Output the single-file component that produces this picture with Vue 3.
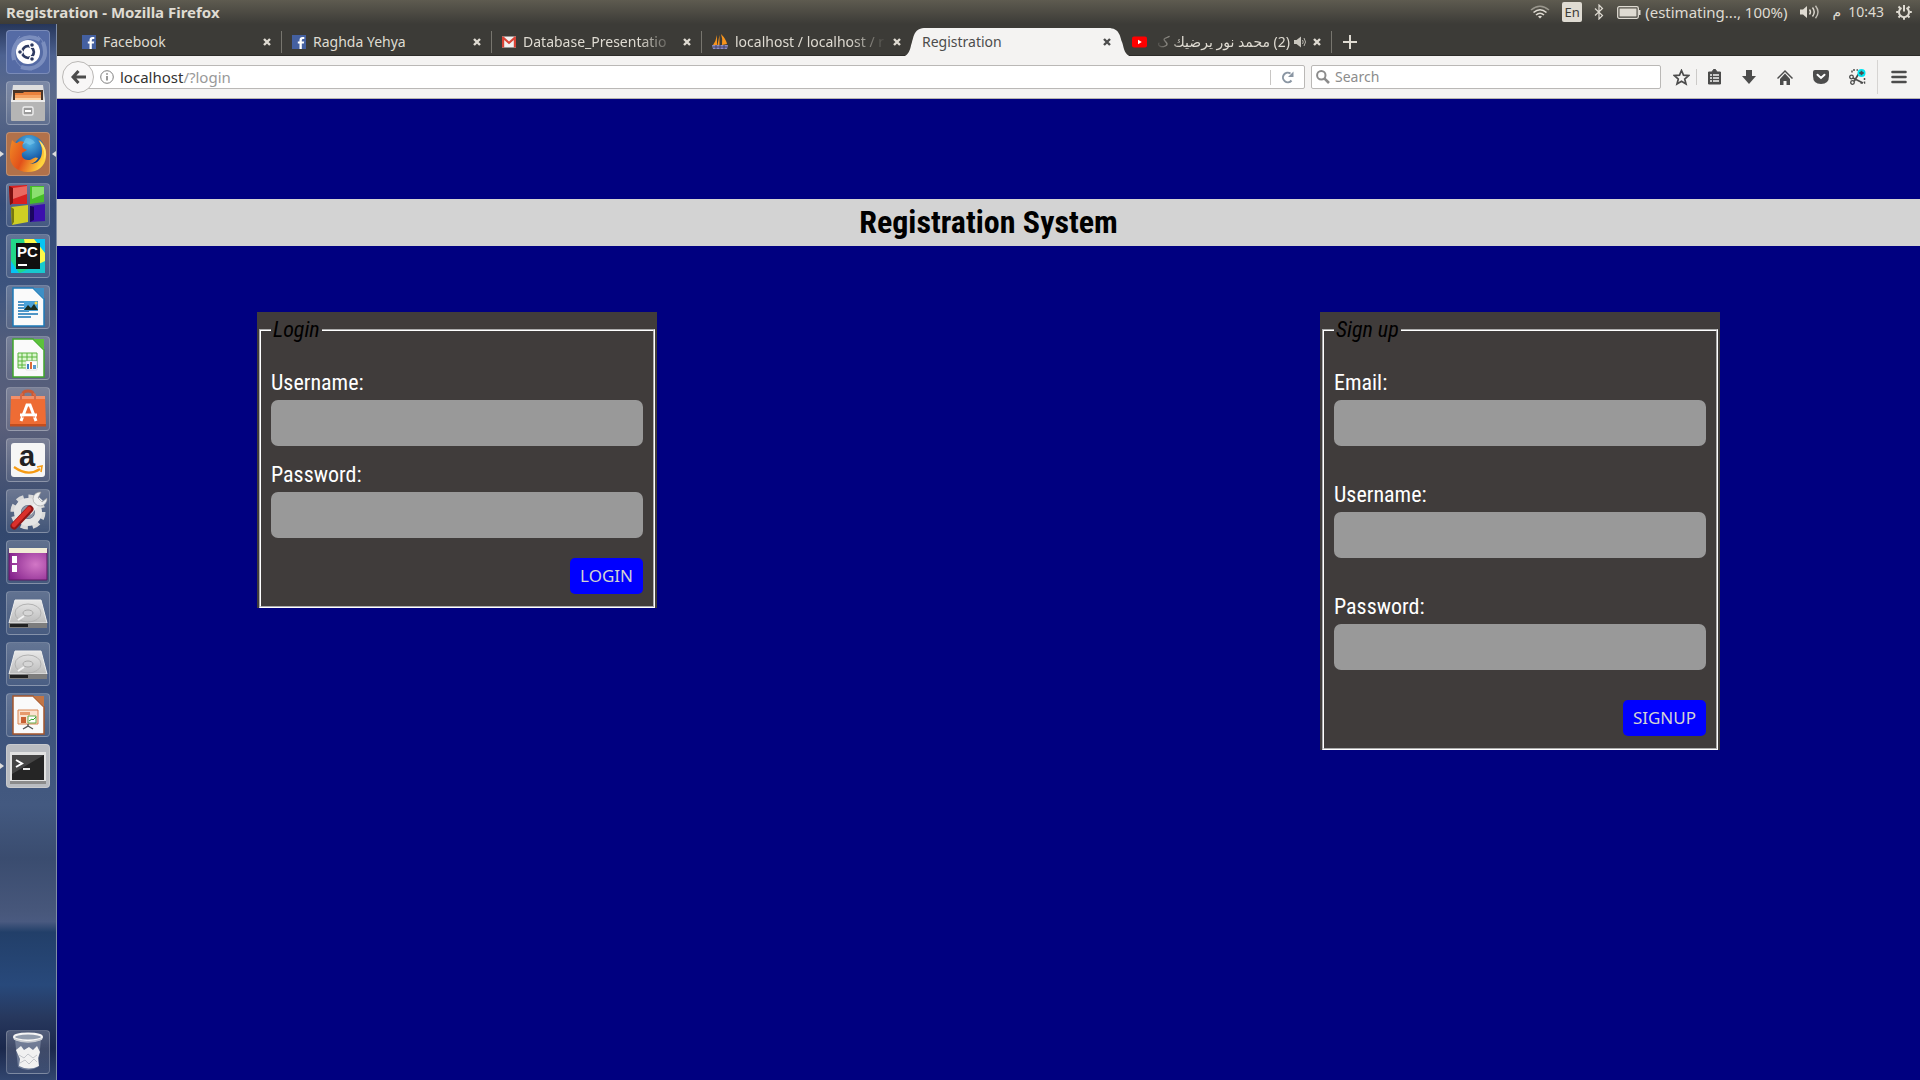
<script setup>
import { ref } from 'vue'

const tabs = [
  { title: 'Facebook', icon: 'facebook' },
  { title: 'Raghda Yehya', icon: 'facebook' },
  { title: 'Database_Presentatio', icon: 'gmail', fade: true },
  { title: 'localhost / localhost / r', icon: 'sails', fade: true, bare: true },
  { title: 'Registration', active: true },
  { title: '(2) محمد نور يرضيك ک', icon: 'youtube', rtl: true, audio: true },
]

const launcher = [
  { id: 'dash', label: 'Search your computer' },
  { id: 'files', label: 'Files' },
  { id: 'firefox', label: 'Firefox', tone: 'orange', running: true, focused: true },
  { id: 'codeblocks', label: 'Code::Blocks' },
  { id: 'pycharm', label: 'PyCharm' },
  { id: 'writer', label: 'Writer' },
  { id: 'calc', label: 'Calc' },
  { id: 'software', label: 'Software' },
  { id: 'amazon', label: 'Amazon' },
  { id: 'settings', label: 'System Settings' },
  { id: 'switcher', label: 'Workspace Switcher' },
  { id: 'disk', label: 'Volume 1' },
  { id: 'disk', label: 'Volume 2' },
  { id: 'impress', label: 'Impress' },
  { id: 'terminal', label: 'Terminal', tone: 'light', running: true },
  { id: 'trash', label: 'Trash' },
]

const forms = [
  {
    id: 'login',
    legend: 'Login',
    submit: 'LOGIN',
    fields: [
      { name: 'username', label: 'Username:', type: 'text' },
      { name: 'password', label: 'Password:', type: 'password' },
    ],
  },
  {
    id: 'signup',
    legend: 'Sign up',
    submit: 'SIGNUP',
    fields: [
      { name: 'email', label: 'Email:', type: 'email' },
      { name: 'username', label: 'Username:', type: 'text' },
      { name: 'password', label: 'Password:', type: 'password' },
    ],
  },
]

const values = ref({})
</script>

<template>
  <div class="desktop">
    <header class="panel">
      <span class="panel-title">Registration - Mozilla Firefox</span>
      <div class="indicators">
        <svg class="wifi" width="20" height="14" viewBox="0 0 20 14" fill="none" stroke="#dfdbd2" stroke-width="1.6">
          <path d="M1 5Q10-2.500 19 5" opacity=".5" /><path d="M3.500 7.500Q10 2 16.500 7.500" /><path d="M6 10Q10 6.500 14 10" /><path d="M8 11.500Q10 10 12 11.500L10 13.500Z" fill="#dfdbd2" stroke="none" />
        </svg>
        <span class="keyboard">En</span>
        <svg class="bluetooth" width="10" height="16" viewBox="0 0 10 16" fill="none" stroke="#dfdbd2" stroke-width="1.2">
          <path d="M1 4.500L8.500 11.500L5 15V1L8.500 4.500L1 11.500" />
        </svg>
        <svg class="battery" width="24" height="13" viewBox="0 0 24 13">
          <rect x=".7" y=".7" width="20.600" height="11.600" rx="1.500" fill="none" stroke="#dfdbd2" stroke-width="1.300" />
          <rect x="2.500" y="2.500" width="17" height="8" fill="#dfdbd2" /><path d="M22 4h1.500v5H22z" fill="#dfdbd2" />
        </svg>
        <span class="estimate">(estimating..., 100%)</span>
        <svg class="volume" width="20" height="14" viewBox="0 0 20 14" fill="none" stroke="#dfdbd2" stroke-width="1.400">
          <path d="M0 4.500h3L7 1v12L3 9.500H0z" fill="#dfdbd2" stroke="none" />
          <path d="M9.500 4.500q2 2.500 0 5" /><path d="M12.500 2.500q3.500 4.500 0 9" /><path d="M15.500 .7q5 6.300 0 12.600" opacity=".8" />
        </svg>
        <span class="clock"><span>م</span><span>10:43</span></span>
        <svg class="power" width="16" height="16" viewBox="0 0 16 16" fill="none" stroke="#dfdbd2">
          <path d="M5.500 3.800A5 5 0 1 0 10.500 3.800" stroke-width="2" /><path d="M8 1v6.500" stroke-width="2" />
          <path d="M.2 8h2.300M13.500 8h2.300M2.500 2.500l1.700 1.700M13.500 2.500l-1.700 1.700M2.500 13.500l1.700-1.700M13.500 13.500l-1.700-1.700M8 13.500v2.300" stroke-width="2" />
        </svg>
      </div>
    </header>

    <div class="workspace">
      <nav class="launcher" aria-label="Launcher">
        <button
          v-for="item in launcher"
          :key="item.label"
          type="button"
          class="tile"
          :class="[item.tone, item.id, { running: item.running, focused: item.focused }]"
          :aria-label="item.label"
        >
          <svg v-if="item.id === 'dash'" viewBox="0 0 44 44">
            <g fill="none" stroke="#c3cfee" opacity=".35"><path d="M8 30C4 12 20 2 34 10" stroke-width="4" /><path d="M37 12c7 18-6 30-22 25" stroke-width="4" /><path d="M14 6C2 18 8 40 26 40M32 6c10 8 8 22 2 28" /></g>
            <circle cx="22" cy="22" r="12" fill="#fff" />
            <circle cx="22" cy="22" r="5.800" fill="none" stroke="#2d3a61" stroke-width="2.800" />
            <g stroke="#fff" stroke-width="1.200"><path d="M22 22h-8M22 22l4-7M22 22l4 7" /><circle cx="14" cy="22" r="2.400" fill="#2d3a61" /><circle cx="26" cy="15" r="2.400" fill="#2d3a61" /><circle cx="26" cy="29" r="2.400" fill="#2d3a61" /></g>
            <circle cx="22" cy="22" r="4.300" fill="#fff" />
          </svg>

          <svg v-else-if="item.id === 'files'" viewBox="0 0 44 44">
            <path d="M7 4h30l2 15H5z" fill="#dedede" /><path d="M7 9h30v10H7z" fill="#4a3528" />
            <path d="M9 12h8l1-1h17v8H9z" fill="#e8803c" /><path d="M9 14h26v5H9z" fill="#f3a263" /><path d="M9 17h26v2H9z" fill="#fbd0a0" />
            <rect x="5" y="19" width="34" height="21" rx="1" fill="#b5b5b5" /><path d="M5 19h34v2H5z" fill="#ececec" />
            <rect x="17" y="26" width="10" height="8" rx="1.500" fill="#9a9a9a" stroke="#eee" stroke-width="1.400" /><path d="M19 29h6v2h-6z" fill="#fff" />
          </svg>

          <svg v-else-if="item.id === 'firefox'" viewBox="0 0 44 44">
            <defs>
              <radialGradient id="globe" cx=".5" cy=".25" r=".8"><stop offset="0" stop-color="#55b8e8" /><stop offset=".6" stop-color="#1c63ad" /><stop offset="1" stop-color="#0b2b66" /></radialGradient>
              <linearGradient id="fox" x1="0" y1="0" x2="1" y2=".4"><stop offset="0" stop-color="#f08a25" /><stop offset=".5" stop-color="#e2501a" /><stop offset="1" stop-color="#ffd23c" /></linearGradient>
            </defs>
            <circle cx="23" cy="19" r="16" fill="url(#globe)" />
            <path d="M20 6c4 0 8 2 9 5l-5 2-4-2-4 2z" fill="#86cdf0" opacity=".5" />
            <path d="M6 8c2 2 3 3 5 3 2-2 5-2 7-1-2 2-2 4-1 6l4 2-5 3c-1 4 2 7 6 7 5 0 6-4 10-2-2 4-6 6-10 6 9 1 14-5 14-13 0-5-2-8-4-11 6 4 9 10 8 17-1 9-8 15-18 15C11 40 3 33 4 22 4 16 5 13 6 8z" fill="url(#fox)" />
            <path d="M33 8c6 5 9 12 5 20 1-6 0-10-2-13z" fill="#ffe36a" />
          </svg>

          <svg v-else-if="item.id === 'codeblocks'" viewBox="0 0 44 44">
            <path d="M3 3l18-1v19H4z" fill="#d82020" /><path d="M3 3l4 2v15l-3 2z" fill="#7c1010" /><path d="M7 5l14-2v8L7 16z" fill="#ea6961" />
            <path d="M24 3h14v16l-14 2z" fill="#47bd28" /><path d="M26 4h12v7l-12 5z" fill="#8be06f" />
            <path d="M5 24l17-2v17L6 42z" fill="#cfcf24" /><path d="M5 24l3 2v13l-2 3z" fill="#77770f" />
            <path d="M24 23l15-2v17l-15 1z" fill="#3b10ad" /><path d="M24 23l4 1v13l-4 2z" fill="#1b0660" />
          </svg>

          <svg v-else-if="item.id === 'pycharm'" viewBox="0 0 44 44">
            <path d="M5 5h34v34H5z" fill="#21d789" /><path d="M18 5h16l5 12v12l-15 10z" fill="#fcf84a" /><path d="M5 27l8 12H5zM28 5h11v14z" fill="#07c3f2" /><path d="M39 27v12H14z" fill="#19c9ce" />
            <path d="M10 9h24v26H10z" fill="#101010" /><text x="11" y="23" class="glyph pc">PC</text><path d="M12 30h9v2h-9z" fill="#fff" />
          </svg>

          <svg v-else-if="item.id === 'writer' || item.id === 'calc' || item.id === 'impress'" viewBox="0 0 44 44">
            <path d="M7 3h20l11 11v27H7z" fill="#fafafa" :stroke="item.id === 'writer' ? '#1c7ab8' : item.id === 'calc' ? '#3fa62b' : '#a4562c'" stroke-width="1.500" />
            <path d="M27 3h11v11z" :fill="item.id === 'writer' ? '#3c8fc6' : item.id === 'calc' ? '#5cc13b' : '#c27545'" />
            <g v-if="item.id === 'writer'">
              <path d="M12 17h11M12 20h11M12 23h11M12 26h11M12 29h20M12 32h13" stroke="#1774b5" stroke-width="1.500" />
              <path d="M18 16h14v10H18z" fill="#4aa2d8" /><path d="M18 25l4-5 3 3 3-4 4 6z" fill="#1d2f20" /><circle cx="30" cy="18" r="1.500" fill="#ffdb45" />
            </g>
            <g v-else-if="item.id === 'calc'">
              <path d="M12 17h19v15H12zM12 21h19M12 25h19M12 29h19M16 17v15M21 17v15M26 17v15" fill="#dcf6cf" stroke="#58b43c" />
              <path d="M20 25h11v9H20z" fill="#fff" stroke="#ccc" stroke-width=".5" /><path d="M21 28h2v5h-2z" fill="#3b82c4" /><path d="M24 26h2v7h-2z" fill="#dd6b3a" /><path d="M27 29h3v4h-3z" fill="#5a9bd0" />
            </g>
            <g v-else>
              <path d="M12 17h20v14H12z" fill="#fbe2cf" stroke="#d98551" /><path d="M14 19h10v3H14z" fill="#e79a6c" /><path d="M15 24h5v6h-5z" fill="#c86033" /><path d="M22 23h8v7h-8z" fill="#fff" stroke="#65a948" /><path d="M23 28l3-2 1 1 3-3" fill="none" stroke="#35a22b" />
              <path d="M22 31v2l-5 3M22 33l5 3" fill="none" stroke="#555" stroke-width="1.400" />
            </g>
          </svg>

          <svg v-else-if="item.id === 'software'" viewBox="0 0 44 44">
            <path d="M17 14V7q0-3 5-3t5 3v7" fill="none" stroke="#c95a35" stroke-width="3" />
            <path d="M5 9h34l1 30H4z" fill="#ee6c34" /><path d="M5 9h34v3H5z" fill="#f2906a" /><path d="M4 37h36v2.500H4z" fill="#c34e1e" />
            <path d="M15 13V8q0-1 2-1M29 13V8q0-1-2-1" fill="none" stroke="#d36a4a" stroke-width="2" />
            <path d="M15 34l6-16h3l6 16" fill="none" stroke="#fff" stroke-width="3" /><path d="M14 28h17" stroke="#fff" stroke-width="3" /><path d="M16 30h13" stroke="#ee6c34" />
          </svg>

          <svg v-else-if="item.id === 'amazon'" viewBox="0 0 44 44">
            <rect x="5" y="5" width="34" height="34" rx="3" fill="#f6f6f6" />
            <text x="13" y="28" class="glyph amazon-letter">a</text>
            <path d="M8 29q14 10 26 2" fill="none" stroke="#f59a13" stroke-width="2.200" /><path d="M31 29l5-1-1 6" fill="none" stroke="#f59a13" stroke-width="1.600" />
          </svg>

          <svg v-else-if="item.id === 'settings'" viewBox="0 0 44 44">
            <circle cx="22" cy="23" r="15" fill="none" stroke="#d9d9d9" stroke-width="5" stroke-dasharray="7 4.780" />
            <circle cx="22" cy="23" r="10.500" fill="none" stroke="#e4e4e4" stroke-width="7" /><circle cx="22" cy="23" r="6.500" fill="#8f96a4" />
            <path d="M23 24L35 10" stroke="#eee" stroke-width="5" /><path d="M35 3a7 7 0 1 0 6 6l-5 4-4-4z" fill="#eee" stroke="#999" stroke-width=".6" />
            <path d="M8 37L24 20" stroke="#8f1616" stroke-width="7" stroke-linecap="round" /><path d="M8 36L23 20" stroke="#d9302c" stroke-width="4.500" stroke-linecap="round" />
          </svg>

          <svg v-else-if="item.id === 'switcher'" viewBox="0 0 44 44">
            <defs><radialGradient id="wall" cx=".7" cy=".5" r=".8"><stop offset="0" stop-color="#d277c6" /><stop offset="1" stop-color="#82208a" /></radialGradient></defs>
            <path d="M3 9h38v31H3z" fill="url(#wall)" stroke="#5d1863" /><path d="M3 8h38v5H3z" fill="#f1ecd6" />
            <path d="M6 16h5v7H6zM6 25h5v7H6z" fill="#fff" />
          </svg>

          <svg v-else-if="item.id === 'disk'" viewBox="0 0 44 44">
            <defs><linearGradient id="metal" x1="0" y1="0" x2="0" y2="1"><stop offset="0" stop-color="#e8e8e8" /><stop offset="1" stop-color="#bcbcbc" /></linearGradient></defs>
            <path d="M9 9h26l6 23H3z" fill="url(#metal)" stroke="#eee" /><path d="M3 32h38v5H3z" fill="#7d7d7d" /><path d="M4 33h18v3H4z" fill="#222" />
            <ellipse cx="22" cy="22" rx="13" ry="9" fill="none" stroke="#b2b2b2" /><ellipse cx="22" cy="22" rx="5" ry="3" fill="#d5d5d5" stroke="#aaa" /><path d="M18 25l-6 4" stroke="#f3f3f3" stroke-width="2" />
          </svg>

          <svg v-else-if="item.id === 'terminal'" viewBox="0 0 44 44">
            <path d="M4 8h36v31H4z" fill="#e2e2e2" /><path d="M4 37h36v3H4z" fill="#8b8b8b" /><path d="M6 11h32v25H6z" fill="#252525" /><path d="M6 11h32L6 30z" fill="#454545" />
            <path d="M10 16l6 3.500-6 3.500" fill="none" stroke="#fff" stroke-width="2" /><path d="M17 25h7" stroke="#fff" stroke-width="1.800" />
          </svg>

          <svg v-else viewBox="0 0 44 44">
            <path d="M9 10l3 27q10 6 20 0l3-27z" fill="#a9b4c8" opacity=".45" />
            <path d="M10 20l5-4 3 4 5-3 4 3 4-4 3 6-2 6 1 8q-10 5-20 0l1-7z" fill="#f1f1f1" /><path d="M13 25l5 3 4-4 5 4 4-3M14 33l5-3 4 4 5-5 3 3" stroke="#c4c6cb" fill="none" />
            <ellipse cx="22" cy="7" rx="14" ry="3.500" fill="#919cad" stroke="#f5f5f5" stroke-width="2" /><path d="M8 9q14 6 28 0" fill="none" stroke="#c9ccd2" stroke-width="1.500" />
          </svg>
        </button>
      </nav>

      <div class="browser">
        <div class="tabs">
          <div v-for="(tab, i) in tabs" :key="i" class="tab" :class="{ active: tab.active, bare: tab.bare }">
            <svg v-if="tab.active" class="tab-shape" width="234" height="29" viewBox="0 0 234 29">
              <path d="M0 29C10 29 10 20 12 14S14 0 26 0H208C220 0 220 9 222 14S224 29 234 29Z" fill="#f4f3f2" />
            </svg>
            <svg v-if="tab.icon === 'facebook'" class="favicon" width="14" height="14" viewBox="0 0 14 14">
              <path d="M0 0h14v14H0z" fill="#4460a0" /><path d="M7.500 14V8.500H5.800V6.400h1.700V5q0-3 3-3h1.800v2H11q-1.200 0-1.200 1.200v1.200h2.400l-.4 2.100h-2V14z" fill="#fff" />
            </svg>
            <svg v-else-if="tab.icon === 'gmail'" class="favicon" width="14" height="14" viewBox="0 0 14 14">
              <path d="M0 1.500h14v11H0z" fill="#f1f1f1" /><path d="M0 12.500v-11h1.500L7 6.500l5.500-5H14v11h-2.200V5L7 9.300 2.200 5v7.500z" fill="#d84437" />
            </svg>
            <svg v-else-if="tab.icon === 'sails'" class="favicon" width="16" height="16" viewBox="0 0 16 16">
              <path d="M5 1v10H1Q4 7 5 1zM9 0q5 5 6 10l-5 1q1-6-1-11zM7.500 1v10H5.500z" fill="#f7941d" /><path d="M0 11h16l-1 4H1z" fill="#8d8dc0" /><path d="M1 13h14M4 11v4M8 11v4M12 11v4" stroke="#43436e" />
            </svg>
            <svg v-else-if="tab.icon === 'youtube'" class="favicon" width="15" height="14" viewBox="0 0 15 14">
              <rect y="1.500" width="15" height="11" rx="2" fill="#f00" /><path d="M6 4.800v4.400L9.800 7z" fill="#fff" />
            </svg>
            <span class="tab-title" :class="{ faded: tab.fade, rtl: tab.rtl }" :dir="tab.rtl ? 'rtl' : 'ltr'">{{ tab.title }}</span>
            <svg v-if="tab.audio" class="audio" width="13" height="12" viewBox="0 0 13 12" fill="none" stroke="#b9b6ae">
              <path d="M0 4h2.500L7 .5v11L2.500 8H0z" fill="#c9c6be" stroke="none" /><path d="M8.500 4q1.500 2 0 4M10 2q3 4 0 8" />
            </svg>
            <button type="button" class="close" :aria-label="'Close ' + tab.title">
              <svg width="8" height="8" viewBox="0 0 8 8" fill="none" stroke="currentColor" stroke-width="2.400"><path d="M1 1l6 6M7 1L1 7" /></svg>
            </button>
          </div>
          <button type="button" class="new-tab" aria-label="New tab">
            <svg width="14" height="14" viewBox="0 0 14 14" stroke="#dfdbd2" stroke-width="2"><path d="M7 0v14M0 7h14" /></svg>
          </button>
        </div>

        <div class="toolbar">
          <button type="button" class="back" aria-label="Back">
            <svg width="15" height="14" viewBox="0 0 15 14" fill="none" stroke="#4c4c4c" stroke-width="3"><path d="M7.500 1L2 7l5.500 6M2 7h13" /></svg>
          </button>
          <div class="address">
            <svg width="14" height="14" viewBox="0 0 14 14" fill="none" stroke="#808080"><circle cx="7" cy="7" r="6.300" /><path d="M7 6v4.500M7 3.200v1.600" stroke-width="1.600" /></svg>
            <a class="url" href="?login">localhost<span>/?login</span></a>
            <button type="button" class="reload" aria-label="Reload">
              <svg width="13" height="13" viewBox="0 0 13 13" fill="none" stroke="#8a96a3" stroke-width="2"><path d="M9.500 2.500A4.800 4.800 0 1 0 10.500 9.500" /><path d="M12.500 .5V6H7z" fill="#8a96a3" stroke="none" /></svg>
            </button>
          </div>
          <label class="search">
            <svg width="14" height="14" viewBox="0 0 14 14" fill="none" stroke="#8b8b8b" stroke-width="2"><circle cx="5.300" cy="5.300" r="4.200" /><path d="M8.300 8.300L13 13" stroke-width="2.600" /></svg>
            <input type="text" placeholder="Search" aria-label="Search" />
          </label>
          <div class="tools">
            <button type="button" class="tool star" aria-label="Bookmark"><svg width="17" height="17" viewBox="0 0 17 17"><path d="M8.500 1.500l2 4.700 5.200.4-4 3.400 1.300 5-4.500-2.700L4 15l1.300-5-4-3.400 5.200-.4z" fill="none" stroke="#4c4c4c" stroke-width="1.700" /></svg></button>
            <button type="button" class="tool" aria-label="Bookmarks list"><svg width="15" height="16" viewBox="0 0 15 16"><path d="M1.500 3H5l1.500-2.500h2L10 3h3.500v12h-12z" fill="#4c4c4c" stroke="#4c4c4c" stroke-linejoin="round" /><path d="M3 6h2M3 9h2M3 12h2M6 6h6M6 9h6M6 12h6" stroke="#f4f3f2" stroke-width="1.600" /></svg></button>
            <button type="button" class="tool" aria-label="Downloads"><svg width="14" height="14" viewBox="0 0 14 14"><path d="M4 0h6v6h4l-7 8-7-8h4z" fill="#4c4c4c" /></svg></button>
            <button type="button" class="tool" aria-label="Home"><svg width="16" height="15" viewBox="0 0 16 15"><path d="M0 8l8-8 8 8-1 1-7-7-7 7z" fill="#4c4c4c" /><path d="M3 9l5-5.500L13 9v6H9.500v-4h-3v4H3z" fill="#4c4c4c" /></svg></button>
            <button type="button" class="tool" aria-label="Pocket"><svg width="16" height="14" viewBox="0 0 16 14"><path d="M2 0h12q2 0 2 2v4q0 8-8 8T0 6V2q0-2 2-2z" fill="#4c4c4c" /><path d="M4.500 4.700L8 8l3.500-3.300" fill="none" stroke="#fff" stroke-width="2" stroke-linecap="round" /></svg></button>
            <button type="button" class="tool" aria-label="Clip"><svg width="17" height="16" viewBox="0 0 17 16" fill="none" stroke="#4c4c4c"><path d="M3 3.500V1h6M15.500 9v5h-5" stroke-width="1.500" stroke-dasharray="2 1.500" /><circle cx="2.500" cy="8" r="1.800" stroke-width="1.300" /><circle cx="3.500" cy="13.500" r="1.800" stroke-width="1.300" /><path d="M4 9l10 5M5 12.500L9.500 5" stroke-width="1.700" /><circle cx="12.500" cy="4" r="4" fill="#00e5f2" stroke="none" /><path d="M12.500 1.800v4.400M10.300 4h4.400" stroke-width="1.800" /></svg></button>
            <button type="button" class="menu" aria-label="Menu"><svg width="16" height="14" viewBox="0 0 16 14" stroke="#4c4c4c" stroke-width="2.600" stroke-linecap="round"><path d="M1.500 2h13M1.500 7h13M1.500 12h13" /></svg></button>
          </div>
        </div>

        <main class="page">
          <h1>Registration System</h1>
          <div class="forms">
            <form v-for="form in forms" :key="form.id" class="card" :class="form.id" @submit.prevent>
              <fieldset>
                <legend>{{ form.legend }}</legend>
                <div class="fields">
                  <div v-for="field in form.fields" :key="field.name" class="field">
                    <label :for="form.id + '-' + field.name">{{ field.label }}</label>
                    <input :id="form.id + '-' + field.name" v-model="values[form.id + field.name]" :type="field.type" autocomplete="off" />
                  </div>
                </div>
                <button type="submit" class="submit">{{ form.submit }}</button>
              </fieldset>
            </form>
          </div>
        </main>
      </div>
    </div>
  </div>
</template>

<style>
body {
  margin: 0;
  background: #000080;
}
</style>

<style scoped>
* {
  box-sizing: border-box;
}
button {
  padding: 0;
  border: 0;
  background: none;
  font: inherit;
  color: inherit;
}
svg {
  display: block;
  flex: none;
}
.desktop {
  display: flex;
  flex-direction: column;
  min-height: 100vh;
  font: 14px/20px "Noto Sans", "DejaVu Sans", sans-serif;
}

/* Top panel */
.panel {
  display: flex;
  align-items: center;
  justify-content: space-between;
  height: 24px;
  padding: 0 8px 0 6px;
  background: linear-gradient(#5e5b50, #3c3b37);
  color: #dfdbd2;
}
.panel-title {
  font-size: 15px;
  font-weight: 700;
}
.indicators {
  display: flex;
  align-items: center;
}
.keyboard {
  width: 20px;
  margin: 0 12px;
  border-radius: 2px;
  background: #dfdbd2;
  color: #3c3b37;
  font-size: 13px;
  text-align: center;
}
.battery {
  margin: 0 4px 0 13px;
}
.estimate {
  font-size: 15px;
}
.volume {
  margin: 0 13px 0 12px;
}
.clock {
  display: flex;
  gap: 7px;
  margin-right: 12px;
}

.workspace {
  display: flex;
  flex: 1;
}

/* Launcher */
.launcher {
  display: flex;
  flex: none;
  flex-direction: column;
  gap: 7px;
  width: 57px;
  padding: 6px;
  border-right: 1px solid #7f8da6;
  background: linear-gradient(#26365a 0%, #4d6291 3%, #5c6b8b 7%, #344a76 17%, #3d547e 25%, #515d7c 30%, #5a5f7a 38%, #33486e 48%, #3b5179 62%, #435980 74%, #3a4c6f 79%, #47577b 84%, #4a5a80 85%, #223f69 86%, #28497b 91%, #27385e 94%, #1b284c 97%, #32466f 100%);
}
.tile {
  position: relative;
  width: 44px;
  height: 44px;
  border: 1px solid rgba(255, 255, 255, 0.22);
  border-radius: 4px;
  background: linear-gradient(rgba(255, 255, 255, 0.22), rgba(255, 255, 255, 0.08));
}
.tile svg {
  width: 44px;
  height: 44px;
  margin: -1px;
}
.tile.dash {
  background: #556ba5;
}
.tile.orange {
  background: #b1714a;
}
.tile.light {
  background: #b9bcc1;
}
.tile.trash {
  margin-top: auto;
}
.tile.running::before,
.tile.focused::after {
  content: "";
  position: absolute;
  top: 18px;
  border: 3px solid transparent;
}
.tile.running::before {
  left: -7px;
  border-left: 4px solid #dcdcdc;
}
.tile.focused::after {
  right: -7px;
  border-right: 4px solid #dcdcdc;
}
.glyph {
  font-family: "Liberation Sans", sans-serif;
  font-weight: 700;
}
.pc {
  font-size: 15px;
  fill: #fff;
}
.amazon-letter {
  font-size: 29px;
  fill: #222;
}

/* Browser chrome */
.browser {
  display: flex;
  flex: 1;
  flex-direction: column;
  min-width: 0;
}
.tabs {
  display: flex;
  height: 32px;
  padding-left: 15px;
  background: #3c3b37;
  border-bottom: 1px solid #2c2b28;
  color: #dfdbd2;
}
.tab {
  position: relative;
  display: flex;
  align-items: center;
  width: 210px;
  padding: 4px 11px 0 10px;
}
.tab:not(.active):not(.bare)::after {
  content: "";
  position: absolute;
  top: 7px;
  right: 0;
  width: 1px;
  height: 22px;
  background: #77756e;
}
.tab.active {
  color: #4c4c4c;
}
.tab-shape {
  position: absolute;
  top: 4px;
  left: -12px;
}
.favicon {
  margin-right: 7px;
}
.tab-title {
  position: relative;
  flex: 1;
  min-width: 0;
  white-space: nowrap;
}
.faded {
  -webkit-mask-image: linear-gradient(to right, #000 75%, transparent);
  mask-image: linear-gradient(to right, #000 75%, transparent);
}
.rtl {
  -webkit-mask-image: linear-gradient(to left, #000 80%, transparent);
  mask-image: linear-gradient(to left, #000 80%, transparent);
}
.audio {
  margin-left: 4px;
}
.close {
  position: relative;
  margin-left: 6px;
}
.new-tab {
  padding: 4px 11px 0;
}
.toolbar {
  display: flex;
  align-items: center;
  height: 43px;
  padding: 0 13px 0 5px;
  border-bottom: 1px solid #b5b3b0;
  background: #f4f3f2;
  color: #333;
}
.back {
  position: relative;
  z-index: 1;
  display: grid;
  place-items: center;
  width: 32px;
  height: 32px;
  border: 1px solid #bab8b6;
  border-radius: 50%;
  background: #f8f7f7;
}
.address {
  display: flex;
  flex: 1;
  align-items: center;
  height: 24px;
  margin-left: -8px;
  padding-left: 13px;
  border: 1px solid #bab8b6;
  border-radius: 2px;
  background: #fff;
}
.url {
  flex: 1;
  margin-left: 6px;
  color: #333;
  font-size: 15px;
  text-decoration: none;
}
.url span {
  color: #999;
}
.reload {
  padding: 1px 10px;
  border-left: 1px solid #c8c6c4;
}
.search {
  display: flex;
  align-items: center;
  gap: 5px;
  width: 350px;
  height: 24px;
  margin-left: 6px;
  padding-left: 4px;
  border: 1px solid #bab8b6;
  border-radius: 2px;
  background: #fff;
}
.search input {
  flex: 1;
  min-width: 0;
  padding: 0;
  border: 0;
  outline: 0;
  background: none;
  font: inherit;
}
.search input::placeholder {
  color: #8c8c8c;
}
.tools {
  display: flex;
  align-items: center;
  margin-left: 5px;
}
.tool {
  display: grid;
  place-items: center;
  width: 36px;
  height: 36px;
}
.tool.star {
  width: 31px;
  height: 16px;
  border-right: 1px solid #cccac8;
}
.menu {
  padding: 10px 0 10px 13px;
  margin-left: 2px;
  border-left: 1px solid #d6d4d2;
}
.tool:nth-child(2) {
  width: 34px;
}

/* Web page */
.page {
  flex: 1;
  padding: 100px 0 60px;
  background: #000080;
  font-family: "Roboto Condensed", "Open Sans Condensed", "Noto Sans Condensed", "Liberation Sans", sans-serif;
}
h1 {
  margin: 0;
  background: #d3d3d3;
  color: #000;
  font-size: 32px;
  line-height: 47px;
  text-align: center;
}
.forms {
  display: flex;
  align-items: flex-start;
  justify-content: space-between;
  padding: 66px 200px 0;
}
.card {
  width: 400px;
  padding: 0 2px;
  background: #403c3b;
}
fieldset {
  display: flex;
  flex-direction: column;
  margin: 0;
  padding: 16px 10px 12px;
  border: 2px groove #fff;
}
legend {
  padding: 0 2px;
  color: #000;
  font-size: 22px;
  font-style: italic;
  line-height: 36px;
}
.fields {
  display: flex;
  flex-direction: column;
  gap: 10px;
  margin-bottom: 20px;
}
.signup .fields {
  gap: 30px;
  margin-bottom: 30px;
}
.field label {
  display: block;
  padding-top: 2px;
  color: #fff;
  font-size: 22px;
  line-height: 34px;
}
.field input {
  display: block;
  width: 100%;
  height: 46px;
  padding: 0 10px;
  border: 0;
  border-radius: 7px;
  background: #999;
  font: inherit;
  font-size: 18px;
}
.submit {
  align-self: flex-end;
  height: 36px;
  padding: 0 10px;
  border-radius: 5px;
  background: #0000ff;
  color: #d3d3d3;
  font: 17px/36px "Noto Sans", sans-serif;
}
</style>
